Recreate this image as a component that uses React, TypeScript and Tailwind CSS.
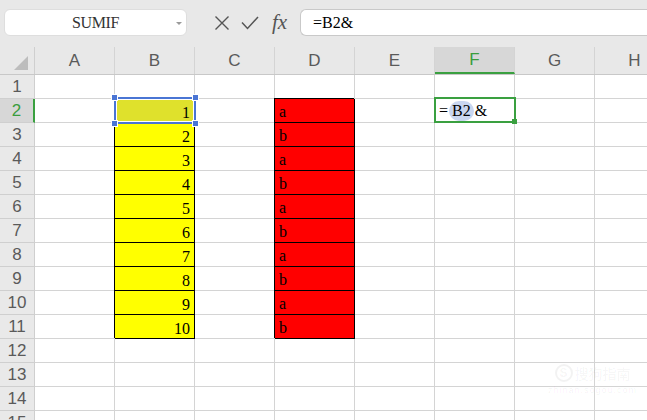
import React from 'react';

const COLS = ['A', 'B', 'C', 'D', 'E', 'F', 'G', 'H'];
const ROWS = Array.from({ length: 15 }, (_, i) => i + 1);

const serif = { fontFamily: '"Liberation Serif", "Noto Sans CJK SC", serif' };
const sans = { fontFamily: '"Liberation Sans", "Noto Sans", sans-serif' };

function Cell({ row, col }: { row: number; col: string }) {
  const inData = row >= 2 && row <= 11;
  if (col === 'B' && inData) {
    const sel = row === 2;
    return (
      <div
        className={`w-[80px] h-[24px] shrink-0 border-r border-b border-black shadow-[-1px_-1px_0_0_#000] flex items-end justify-end pr-[4px] pb-[1px] text-[16px] leading-none text-black ${sel ? 'bg-[#dfe12c]' : 'bg-[#ffff00]'}`}
        style={serif}
      >
        {row - 1}
      </div>
    );
  }
  if (col === 'D' && inData) {
    return (
      <div
        className="w-[80px] h-[24px] shrink-0 border-r border-b border-black shadow-[-1px_-1px_0_0_#000] bg-[#ff0000] flex items-end pl-[4px] pb-[2px] text-[16px] leading-none text-black"
        style={serif}
      >
        {row % 2 === 0 ? 'a' : 'b'}
      </div>
    );
  }
  return <div className="w-[80px] h-[24px] shrink-0 border-r border-b border-[#d4d4d4] bg-white" />;
}

export default function App() {
  return (
    <div className="relative w-[647px] h-[420px] overflow-hidden bg-white">
      {/* Formula bar */}
      <div className="h-[47px] bg-[#e8e8e8] flex items-start pt-[9px]">
        <div className="ml-[4px] w-[183px] h-[27px] bg-white rounded-[6px] border border-[#dedede] relative flex items-center justify-center">
          <span className="text-[16px] text-[#333] tracking-tight" style={serif}>SUMIF</span>
          <svg className="absolute right-[3px] top-[11px]" width="8" height="5" viewBox="0 0 8 5">
            <path d="M1 1 L4 4 L7 1 Z" fill="#9a9a9a" />
          </svg>
        </div>
        <div className="w-[113px] h-[27px] flex items-center">
          <svg className="ml-[27px]" width="16" height="16" viewBox="0 0 16 16">
            <path d="M1.5 1.5 L14.5 14.5 M14.5 1.5 L1.5 14.5" stroke="#555" strokeWidth="1.4" />
          </svg>
          <svg className="ml-[11px]" width="18" height="14" viewBox="0 0 18 14">
            <path d="M1 6.5 L6.5 12.5 L17 1" stroke="#555" strokeWidth="1.5" fill="none" />
          </svg>
          <span className="ml-[13px] text-[21px] italic text-[#555] leading-none" style={serif}>fx</span>
        </div>
        <div className="flex-1 h-[27px] bg-white rounded-l-[6px] border border-r-0 border-[#c9c9c9] flex items-center pl-[12px]">
          <span className="text-[16px] text-black" style={serif}>=B2&amp;</span>
        </div>
      </div>

      {/* Column headers */}
      <div className="flex h-[28px] bg-[#e8e8e8] border-b border-[#c8c8c8]">
        <div className="w-[35px] shrink-0 border-r border-[#cfcfcf] relative">
          <svg className="absolute right-[6px] bottom-[4px]" width="14" height="14" viewBox="0 0 14 14">
            <path d="M14 0 L14 14 L0 14 Z" fill="#bdbdbd" />
          </svg>
        </div>
        {COLS.map((c) => (
          <div
            key={c}
            className={`w-[80px] shrink-0 border-r border-[#d4d4d4] flex items-center justify-center text-[17px] ${c === 'F' ? 'bg-[#d7d7d7] text-[#3a9d3d] border-b-2 border-b-[#3aa040]' : 'text-[#5a5a5a]'}`}
            style={sans}
          >
            {c}
          </div>
        ))}
      </div>

      {/* Rows */}
      {ROWS.map((r) => (
        <div key={r} className="flex">
          <div
            className={`w-[35px] h-[24px] shrink-0 border-b border-[#cfcfcf] flex items-center justify-center text-[17px] ${r === 2 ? 'bg-[#d7d7d7] text-[#3a9d3d] border-r-2 border-r-[#3aa040]' : 'bg-[#e9e9e9] text-[#5a5a5a] border-r border-r-[#cfcfcf]'}`}
            style={sans}
          >
            {r}
          </div>
          {COLS.map((c) => (
            <Cell key={c} row={r} col={c} />
          ))}
        </div>
      ))}

      {/* B2 selection */}
      <div className="absolute left-[114px] top-[97px] w-[82px] h-[27px] border-2 border-[#4a75d4] pointer-events-none">
        <div className="absolute inset-0 border border-white" />
        <div className="absolute -left-[5px] -top-[5px] w-[7px] h-[7px] bg-[#4a75d4] border border-white" />
        <div className="absolute -right-[5px] -top-[5px] w-[7px] h-[7px] bg-[#4a75d4] border border-white" />
        <div className="absolute -left-[5px] -bottom-[5px] w-[7px] h-[7px] bg-[#4a75d4] border border-white" />
        <div className="absolute -right-[5px] -bottom-[5px] w-[7px] h-[7px] bg-[#4a75d4] border border-white" />
      </div>

      {/* F2 editing cell */}
      <div className="absolute left-[434px] top-[97px] w-[82px] h-[26px] border-2 border-[#3aa040] bg-white flex items-end pb-[2px] pl-[3px] text-[16px] leading-none text-black" style={serif}>
        <span>=</span>
        <span className="ml-[1px] px-[3px] rounded-full bg-[#c9d6f0] py-[2px] -mb-[2px]">B2</span>
        <span className="ml-[1px]">&amp;</span>
        <div className="absolute -right-[3px] -bottom-[3px] w-[5px] h-[5px] bg-[#3aa040]" />
      </div>

      {/* Watermark */}
      <div className="absolute left-[548px] top-[364px] flex flex-col items-center pointer-events-none">
        <div className="flex items-center gap-[2px] text-black/5">
          <div className="w-[18px] h-[18px] rounded-full border-2 border-black/5 flex items-center justify-center text-[12px] font-bold" style={sans}>S</div>
          <span className="text-[14px] leading-none" style={{ fontFamily: '"Noto Sans CJK SC", sans-serif' }}>搜狗指南</span>
        </div>
        <span className="text-[9px] leading-none mt-[4px] tracking-[1px] text-black/5" style={sans}>zhinan.sogou.com</span>
      </div>
    </div>
  );
}
